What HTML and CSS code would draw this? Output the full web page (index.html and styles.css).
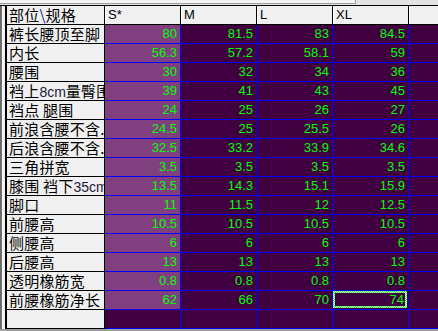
FILE: index.html
```html
<!DOCTYPE html>
<html>
<head>
<meta charset="utf-8">
<link rel="stylesheet" href="styles.css">
</head>
<body>
<div class="frame">
  <div class="topbar"><div class="tab"></div></div>
  <div class="main">
    <div class="leftbar"></div>
    <div class="grid">
      <div class="row head">
        <div class="c lab">部位<span class="bs">\</span>规格</div>
        <div class="c h">S*</div>
        <div class="c h">M</div>
        <div class="c h">L</div>
        <div class="c h">XL</div>
        <div class="c h last"></div>
      </div>
      <div class="row"><div class="c lab">裤长腰顶至脚</div><div class="c s">80</div><div class="c d">81.5</div><div class="c d">83</div><div class="c d">84.5</div><div class="c d last"></div></div>
      <div class="row"><div class="c lab">内长</div><div class="c s">56.3</div><div class="c d">57.2</div><div class="c d">58.1</div><div class="c d">59</div><div class="c d last"></div></div>
      <div class="row"><div class="c lab">腰围</div><div class="c s">30</div><div class="c d">32</div><div class="c d">34</div><div class="c d">36</div><div class="c d last"></div></div>
      <div class="row"><div class="c lab">裆上<span class="lat">8cm</span>量臀围</div><div class="c s">39</div><div class="c d">41</div><div class="c d">43</div><div class="c d">45</div><div class="c d last"></div></div>
      <div class="row"><div class="c lab">裆点 腿围</div><div class="c s">24</div><div class="c d">25</div><div class="c d">26</div><div class="c d">27</div><div class="c d last"></div></div>
      <div class="row"><div class="c lab">前浪含腰不含...</div><div class="c s">24.5</div><div class="c d">25</div><div class="c d">25.5</div><div class="c d">26</div><div class="c d last"></div></div>
      <div class="row"><div class="c lab">后浪含腰不含...</div><div class="c s">32.5</div><div class="c d">33.2</div><div class="c d">33.9</div><div class="c d">34.6</div><div class="c d last"></div></div>
      <div class="row"><div class="c lab">三角拼宽</div><div class="c s">3.5</div><div class="c d">3.5</div><div class="c d">3.5</div><div class="c d">3.5</div><div class="c d last"></div></div>
      <div class="row"><div class="c lab">膝围 裆下<span class="lat">35cm</span></div><div class="c s">13.5</div><div class="c d">14.3</div><div class="c d">15.1</div><div class="c d">15.9</div><div class="c d last"></div></div>
      <div class="row"><div class="c lab">脚口</div><div class="c s">11</div><div class="c d">11.5</div><div class="c d">12</div><div class="c d">12.5</div><div class="c d last"></div></div>
      <div class="row"><div class="c lab">前腰高</div><div class="c s">10.5</div><div class="c d">10.5</div><div class="c d">10.5</div><div class="c d">10.5</div><div class="c d last"></div></div>
      <div class="row"><div class="c lab">侧腰高</div><div class="c s">6</div><div class="c d">6</div><div class="c d">6</div><div class="c d">6</div><div class="c d last"></div></div>
      <div class="row"><div class="c lab">后腰高</div><div class="c s">13</div><div class="c d">13</div><div class="c d">13</div><div class="c d">13</div><div class="c d last"></div></div>
      <div class="row"><div class="c lab">透明橡筋宽</div><div class="c s">0.8</div><div class="c d">0.8</div><div class="c d">0.8</div><div class="c d">0.8</div><div class="c d last"></div></div>
      <div class="row"><div class="c lab">前腰橡筋净长</div><div class="c s">62</div><div class="c d">66</div><div class="c d">70</div><div class="c d sel"><span class="selin">74</span></div><div class="c d last"></div></div>
      <div class="row"><div class="c lab"></div><div class="c d"></div><div class="c d"></div><div class="c d"></div><div class="c d"></div><div class="c d last"></div></div>
    </div>
  </div>
  <div class="bottombar"></div>
</div>
</body>
</html>
```
FILE: styles.css
```css
html, body {
  margin: 0;
  padding: 0;
  background: #f0f0f0;
  overflow: hidden;
}
.frame {
  width: 438px;
  height: 331px;
  display: flex;
  flex-direction: column;
  background: #f0f0f0;
}
.topbar {
  height: 6px;
  background: #e3e3e3;
  border-bottom: 1px solid #000;
  box-sizing: border-box;
  display: flex;
}
.tab {
  width: 355px;
  height: 3px;
  background: #f4f4f4;
  border-right: 1px solid #a0a0a0;
  border-bottom: 1px solid #a0a0a0;
}
.main {
  display: flex;
  height: 323px;
  overflow: hidden;
}
.leftbar {
  width: 7px;
  flex: none;
  box-sizing: border-box;
  background: #f0f0f0;
  border-left: 2px solid #6d6d6d;
  border-right: 2px solid #000;
  box-shadow: inset 1px 0 0 #fff;
}
.grid {
  flex: 1;
  display: flex;
  flex-direction: column;
  background: #400040;
}
.row {
  display: flex;
  height: 19px;
  flex: none;
}
.c {
  box-sizing: border-box;
  height: 19px;
  border-bottom: 1px solid #0000ff;
  border-right: 1px solid #0000ff;
  width: 76px;
  flex: none;
  overflow-x: clip;
  overflow-y: visible;
  white-space: nowrap;
}
.c.last {
  flex: 1;
  border-right: none;
}
.lab {
  width: 98px;
  background: #f0f0f0;
  border-bottom-color: #000;
  border-right-color: #000;
  font-family: "Noto Sans CJK SC", sans-serif;
  font-size: 15px;
  line-height: 18px;
  color: #000;
  padding-left: 2px;
  letter-spacing: 0.2px;
}
.lat {
  font-family: "Liberation Sans", sans-serif;
  font-size: 14px;
  letter-spacing: 0;
  color: #1a1a40;
}
.bs {
  color: #202080;
}
.head .c {
  background: #f0f0f0;
  border-bottom: 1px solid #000;
  border-right: 1px solid #000;
  box-shadow: inset 1px 0 0 #fff;
}
.head .lab {
  box-shadow: none;
}
.h {
  font-family: "Liberation Sans", sans-serif;
  font-size: 13px;
  line-height: 18px;
  color: #000;
  padding-left: 3px;
}
.s, .d {
  font-family: "Liberation Sans", sans-serif;
  font-size: 13px;
  line-height: 18px;
  color: #00ff00;
  text-align: right;
  padding-right: 3px;
}
.s {
  background: #804080;
}
.d {
  background: #400040;
}
.sel {
  padding: 0;
  display: flex;
}
.selin {
  flex: 1;
  margin: 0 1px 1px 0;
  border: 2px solid transparent;
  background:
    linear-gradient(#400040, #400040) padding-box,
    repeating-conic-gradient(#00ff00 0 25%, #ffffff 0 50%) 0 0 / 2px 2px border-box;
  line-height: 14px;
  padding-right: 1px;
  text-align: right;
}
.bottombar {
  flex: 1;
  border-top: 2px solid #a0a0a0;
  background: #fff;
}
```
